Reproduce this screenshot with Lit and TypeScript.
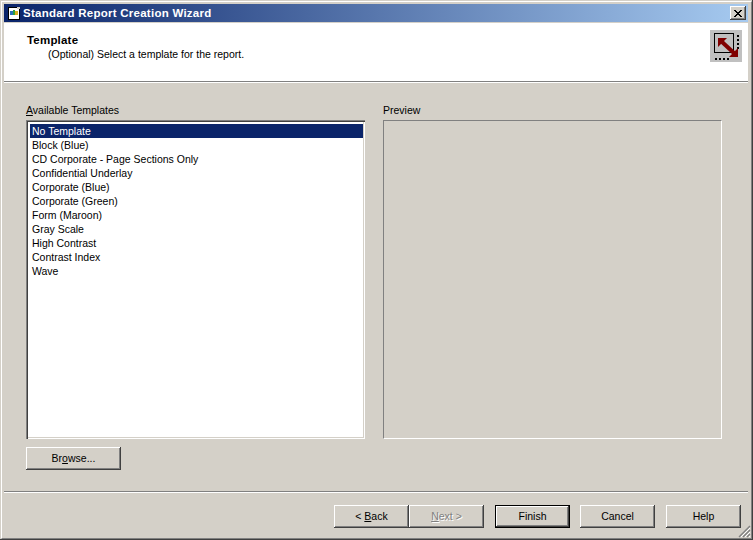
import { LitElement, html, css } from "lit";
import { customElement } from "lit/decorators.js";

const ITEMS = ["No Template","Block (Blue)","CD Corporate - Page Sections Only","Confidential Underlay","Corporate (Blue)","Corporate (Green)","Form (Maroon)","Gray Scale","High Contrast","Contrast Index","Wave"];

@customElement("app-root")
export class AppRoot extends LitElement {
  static styles = css`
    :host { display: block; width: 753px; height: 540px; font-family: "Liberation Sans", Arial, sans-serif; font-size: 10.5px; color: #000; }
    * { box-sizing: border-box; }
    .win { position: relative; width: 753px; height: 540px; background: #d4d0c8; padding: 4px; display: flex; flex-direction: column;
      border-right: 1px solid #404040; border-bottom: 1px solid #404040; }
    .win::before { content: ""; position: absolute; left: 1px; top: 1px; right: 0; bottom: 0; border-left: 1px solid #fff; border-top: 1px solid #fff; border-right: 1px solid #808080; border-bottom: 1px solid #808080; pointer-events: none; }
    .title { height: 18px; background: linear-gradient(90deg, #0a246a, #a6caf0); display: flex; align-items: center; padding: 0 2px 0 4px; gap: 3px; flex: none; }
    .title-text { color: #fff; font-weight: bold; font-size: 11.5px; letter-spacing: 0.25px; flex: 1; white-space: nowrap; }
    .close { width: 16px; height: 14px; background: #d4d0c8; box-shadow: inset -1px -1px 0 #404040, inset 1px 1px 0 #fff, inset -2px -2px 0 #808080; display: flex; align-items: center; justify-content: center; }
    .head { margin-top: 1px; height: 59px; background: #fff; border-bottom: 1px solid #808080; flex: none; display: flex; justify-content: space-between; padding: 7px 6px 0 23px; }
    .head h1 { font-size: 11.5px; font-weight: bold; margin: 3px 0 0; line-height: 14px; letter-spacing: 0.2px; }
    .head p { margin: 0 0 0 21px; line-height: 14px; }
    .rule-w { height: 1px; background: #fff; flex: none; }
    .main { flex: 1; display: grid; grid-template-columns: 339px 339px; column-gap: 18px; padding: 20px 0 0 22px; align-content: start; }
    .col { display: flex; flex-direction: column; }
    .lbl { height: 17px; line-height: 14px; }
    .list { height: 319px; background: #fff; padding: 4px 2px 2px 4px; box-shadow: inset 1px 1px 0 #808080, inset 2px 2px 0 #404040, inset -1px -1px 0 #fff, inset -2px -2px 0 #d4d0c8; }
    .item { height: 14px; line-height: 14px; padding-left: 2px; white-space: nowrap; }
    .item.sel { background: #0a246a; color: #fff; }
    .preview { height: 319px; border: 1px solid; border-color: #808080 #fff #fff #808080; }
    .browse-row { margin-top: 8px; }
    .btn { height: 23px; padding-bottom: 2px; background: #d4d0c8; display: flex; align-items: center; justify-content: center; box-shadow: inset -1px -1px 0 #404040, inset 1px 1px 0 #fff, inset -2px -2px 0 #808080; white-space: nowrap; }
    .btn.browse { width: 95px; }
    .btn.w { width: 75px; }
    .btn.def { box-shadow: inset 0 0 0 1px #000, inset -2px -2px 0 #404040, inset 2px 2px 0 #fff, inset -3px -3px 0 #808080; }
    .btn.off { color: #808080; text-shadow: 1px 1px 0 #fff; }
    .sep { flex: none; height: 2px; border-top: 1px solid #808080; border-bottom: 1px solid #fff; }
    .foot { flex: none; height: 42px; display: flex; justify-content: flex-end; padding: 12px 7px 0 0; position: relative; }
    .gap-11 { margin-left: 11px; }
    .gap-10 { margin-left: 10px; }
    .grip { position: absolute; right: -3px; bottom: -3px; }
    svg { display: block; }
    u { text-decoration: underline; text-underline-offset: 1px; }
  `;

  render() {
    return html`<div class="win">
      <div class="title">
        <svg width="12" height="13" viewBox="0 0 12 13" shape-rendering="crispEdges">
          <rect x="0" y="0" width="12" height="13" fill="#000"/>
          <rect x="1" y="1" width="10" height="11" fill="#fff"/>
          <rect x="9" y="0" width="3" height="2" fill="#d4d0c8"/>
          <rect x="2" y="4" width="3" height="4" fill="#2a6fb8"/>
          <rect x="5" y="3" width="2" height="5" fill="#2e9e3c"/>
          <rect x="7" y="4" width="3" height="4" fill="#d8b020"/>
        </svg>
        <span class="title-text">Standard Report Creation Wizard</span>
        <div class="close">
          <svg width="8" height="7" viewBox="0 0 8 7" shape-rendering="crispEdges" fill="#000">
            <path d="M0 0h2v1h1v1h2V1h1V0h2v1H7v1H6v1H5v1h1v1h1v1h1v1H6V6H5V5H3v1H2v1H0V6h1V5h1V4h1V3H2V2H1V1H0z"/>
          </svg>
        </div>
      </div>
      <div class="head">
        <div>
          <h1>Template</h1>
          <p>(Optional) Select a template for the report.</p>
        </div>
        <svg width="32" height="32" viewBox="0 0 32 32">
          <rect width="32" height="32" fill="#c0c0c0"/>
          <rect x="4.5" y="3.5" width="19" height="19" fill="none" stroke="#000"/>
          <g fill="#000" shape-rendering="crispEdges">
            <rect x="27" y="5" width="2" height="2"/><rect x="27" y="9" width="2" height="2"/><rect x="27" y="13" width="2" height="2"/><rect x="27" y="17" width="2" height="2"/>
            <rect x="5" y="28" width="2" height="2"/><rect x="9" y="28" width="2" height="2"/><rect x="13" y="28" width="2" height="2"/><rect x="17" y="28" width="2" height="2"/>
          </g>
          <path d="M11 11L25 24" stroke="#800000" stroke-width="4" fill="none"/>
          <path d="M8 8H17L8 17z" fill="#800000"/>
          <path d="M28 27H19L28 18z" fill="#800000"/>
        </svg>
      </div>
      <div class="rule-w"></div>
      <div class="main">
        <div class="col">
          <div class="lbl"><u>A</u>vailable Templates</div>
          <div class="list">
            ${ITEMS.map((t, i) => html`<div class="item ${i === 0 ? "sel" : ""}">${t}</div>`)}
          </div>
          <div class="browse-row"><div class="btn browse"><span>Br<u>o</u>wse...</span></div></div>
        </div>
        <div class="col">
          <div class="lbl">Preview</div>
          <div class="preview"></div>
        </div>
      </div>
      <div class="sep"></div>
      <div class="foot">
        <div class="btn w"><span>&lt; <u>B</u>ack</span></div>
        <div class="btn w off"><span><u>N</u>ext &gt;</span></div>
        <div class="btn w def gap-11">Finish</div>
        <div class="btn w gap-10">Cancel</div>
        <div class="btn w gap-11">Help</div>
        <svg class="grip" width="13" height="13" viewBox="0 0 13 13">
          <path d="M12 1L1 12M12 5L5 12M12 9L9 12" stroke="#808080" stroke-width="1.4"/>
          <path d="M12 3L3 12M12 7L7 12M12 11L11 12" stroke="#fff" stroke-width="1"/>
        </svg>
      </div>
    </div>`;
  }
}
